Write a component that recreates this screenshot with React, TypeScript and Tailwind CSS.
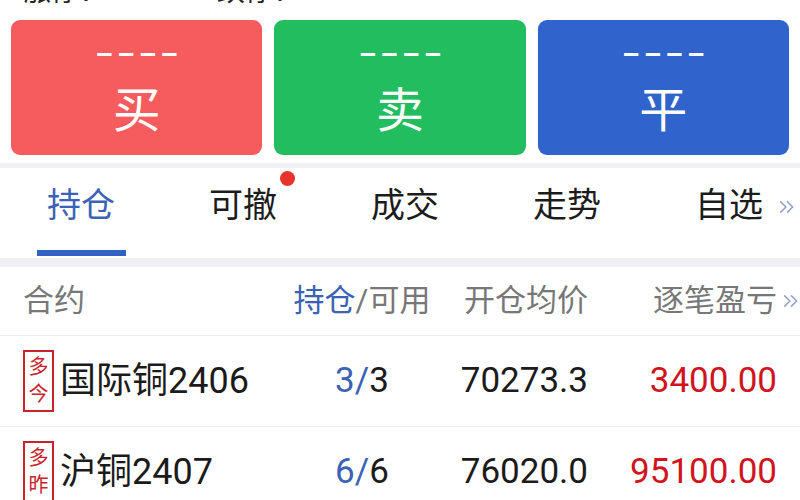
import React from 'react';

const FONT = { fontFamily: 'Roboto, "Noto Sans CJK SC", sans-serif' };

const tabs = ['持仓', '可撤', '成交', '走势', '自选'];

const rows = [
  { dir: '多', day: '今', name: '国际铜2406', hold: '3', avail: '3', price: '70273.3', pnl: '3400.00' },
  { dir: '多', day: '昨', name: '沪铜2407', hold: '6', avail: '6', price: '76020.0', pnl: '95100.00' },
];

function DoubleChevron({ className }: { className?: string }) {
  return (
    <svg viewBox="0 0 16 16" className={className} fill="none" stroke="currentColor" strokeWidth="1.3">
      <path d="M2 3l5 5-5 5" />
      <path d="M8 3l5 5-5 5" />
    </svg>
  );
}

function TradeButton({ label, color }: { label: string; color: string }) {
  return (
    <div className={`flex flex-col items-center rounded-[9px] text-white ${color}`}>
      <span className="mt-[20px] text-[28px] font-bold leading-[30px] tracking-[4px] pl-[4px]">––––</span>
      <span className="mt-[12px] text-[48px] leading-[58px]">{label}</span>
    </div>
  );
}

export default function App() {
  return (
    <div className="w-[800px] h-[500px] overflow-hidden bg-white" style={FONT}>
      <div className="h-[20px] overflow-hidden">
        <div className="flex -mt-[23px] text-[28px] leading-[30px] text-[#222]">
          <span className="ml-[23px] w-[194px]">涨停：</span>
          <span>跌停：</span>
        </div>
      </div>

      <div className="grid grid-cols-3 gap-[12px] px-[11px] pb-[8px]">
        <div className="h-[135px] grid">
          <TradeButton label="买" color="bg-[#f65c5e]" />
        </div>
        <div className="h-[135px] grid">
          <TradeButton label="卖" color="bg-[#21bd5e]" />
        </div>
        <div className="h-[135px] grid">
          <TradeButton label="平" color="bg-[#3063cb]" />
        </div>
      </div>
      <div className="h-[5px] bg-[#f1f1f4]" />

      <div className="relative flex h-[90px]">
        {tabs.map((t, i) => (
          <div key={t} className="relative w-[162px] shrink-0 flex flex-col items-center">
            <span
              className={`relative mt-[17px] text-[34px] leading-[40px] ${i === 0 ? 'text-[#3b62b6]' : 'text-[#1c1c1c]'}`}
            >
              {t}
              {i === 1 && (
                <span className="absolute -right-[18px] -top-[14px] w-[15px] h-[15px] rounded-full bg-[#e8352c]" />
              )}
            </span>
            {i === 0 && <span className="absolute bottom-[2px] w-[89px] h-[6px] bg-[#3162c4]" />}
          </div>
        ))}
        <div className="absolute right-0 top-0 h-full w-[22px] bg-white flex items-center">
          <DoubleChevron className="w-[18px] h-[18px] text-[#8fa2c8] -mt-[12px]" />
        </div>
      </div>
      <div className="h-[9px] bg-[#f1f1f4]" />

      <div className="relative flex items-center h-[69px] border-b border-[#ececef] text-[31px] text-[#777]">
        <span className="w-[290px] pl-[23px]">合约</span>
        <span className="w-[144px] text-center">
          <span className="text-[#3b62b6]">持仓</span>/可用
        </span>
        <span className="w-[154px] text-right">开仓均价</span>
        <span className="w-[189px] text-right">逐笔盈亏</span>
        <DoubleChevron className="absolute right-0 w-[18px] h-[18px] text-[#8fa2c8]" />
      </div>

      {rows.map((r) => (
        <div key={r.name} className="flex items-center h-[91px] border-b border-[#ececef] text-[35px] text-[#1b1b1b]">
          <div className="w-[290px] pl-[23px] flex items-center">
            <div className="w-[31px] h-[62px] border-2 border-[#c8232b] flex flex-col items-center justify-center text-[20px] leading-[27px] text-[#c8232b]">
              <span>{r.dir}</span>
              <span>{r.day}</span>
            </div>
            <span className="ml-[6px] text-[36px]">{r.name}</span>
          </div>
          <span className="w-[144px] text-center">
            <span className="text-[#3b62b6]">{r.hold}/</span>
            {r.avail}
          </span>
          <span className="w-[154px] text-right">{r.price}</span>
          <span className="w-[189px] text-right text-[#d1141d]">{r.pnl}</span>
        </div>
      ))}
    </div>
  );
}
